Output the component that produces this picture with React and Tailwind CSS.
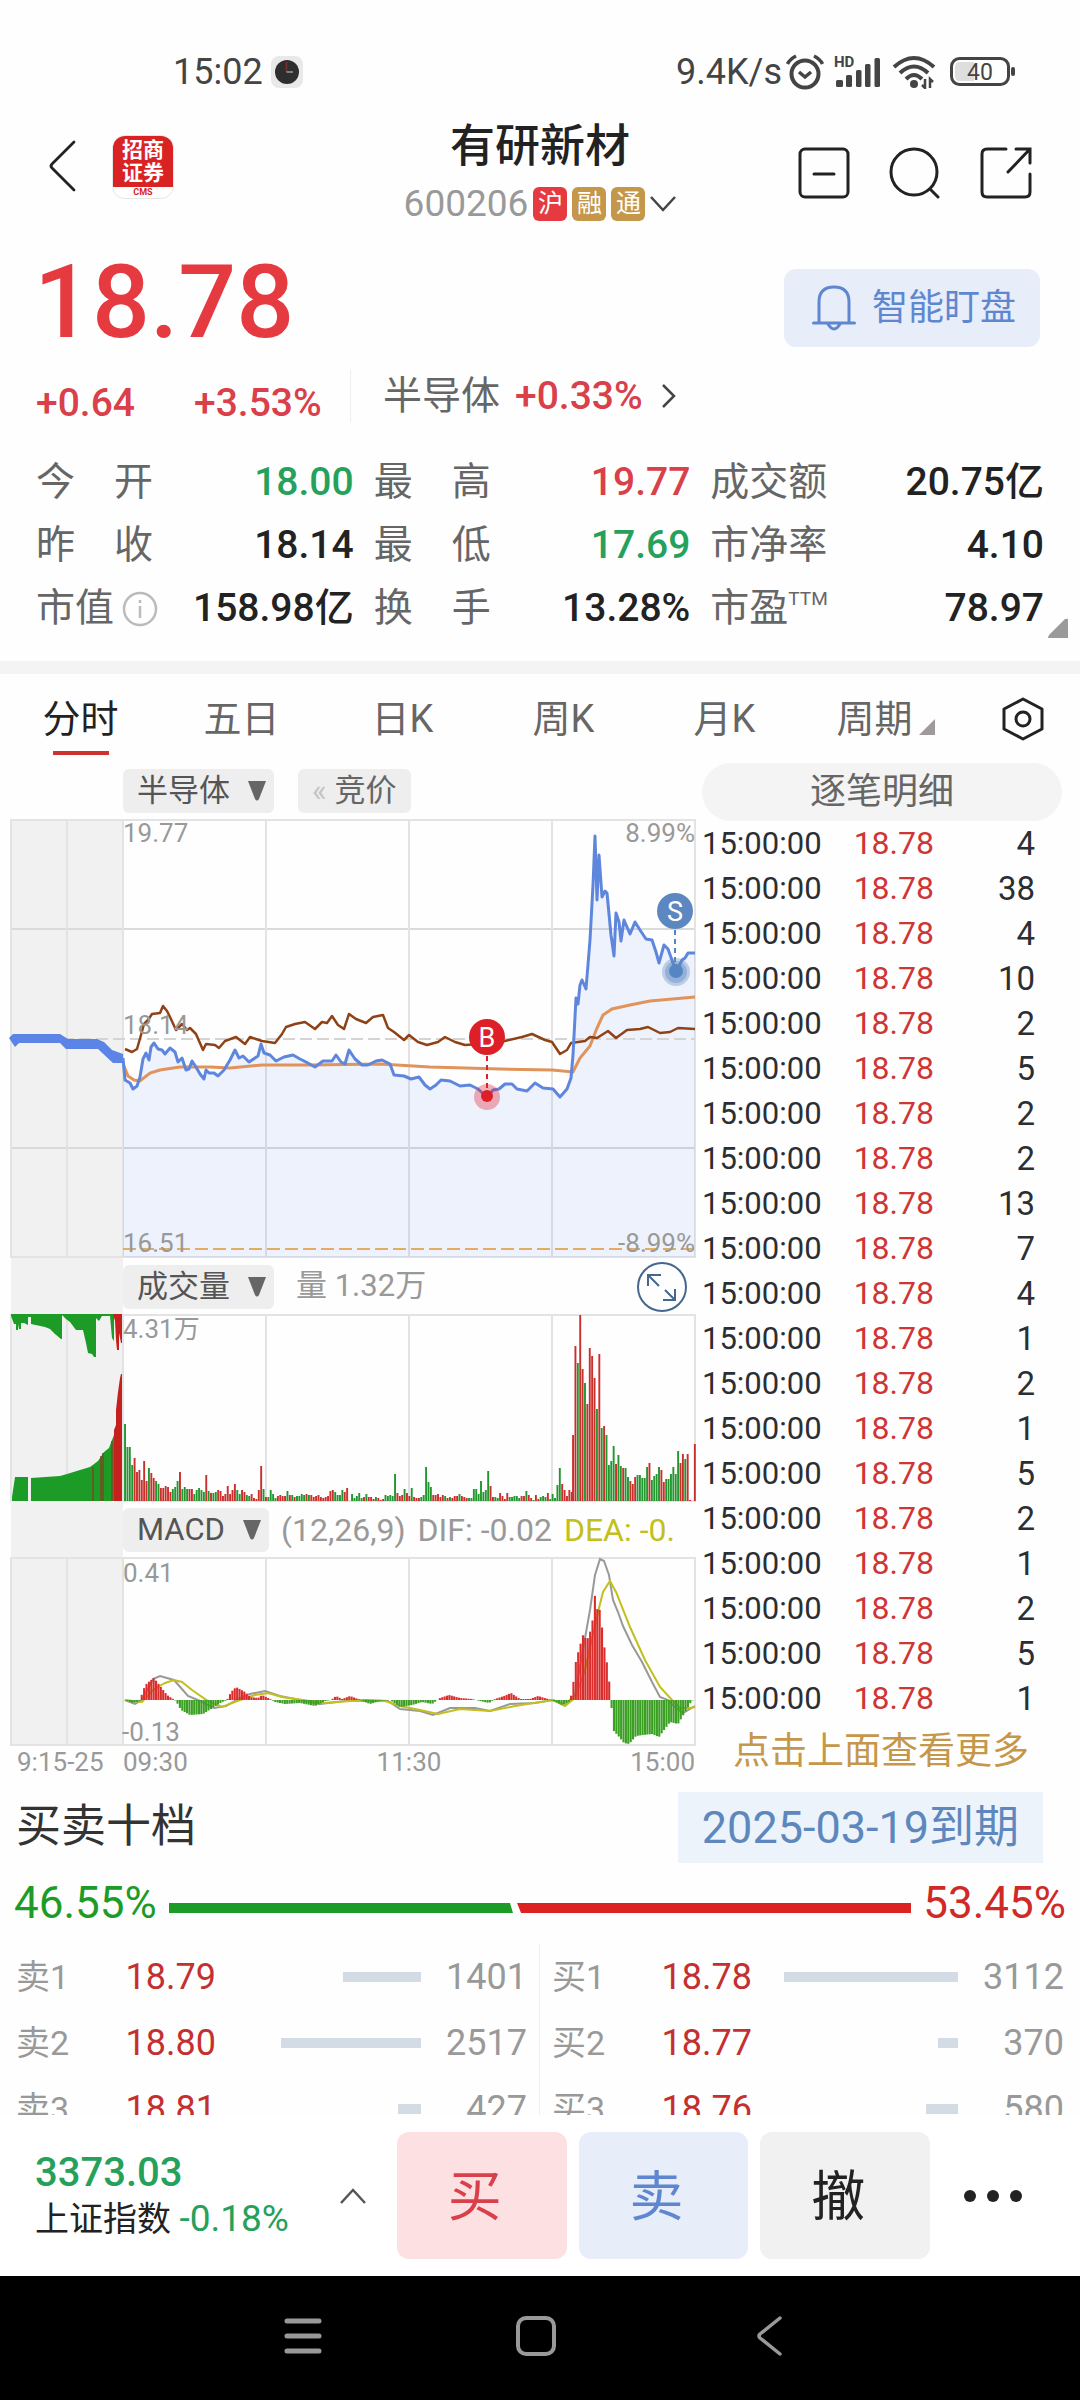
import React, { useState } from 'react';

const GREEN = '#1c9c26';

const indicadores = [
  { label: '今　开', value: '18.00', color: 'text-[#25a15c]' },
  { label: '最　高', value: '19.77', color: 'text-[#d9404a]' },
  { label: '成交额', value: '20.75亿', color: 'text-[#222222]' },
  { label: '昨　收', value: '18.14', color: 'text-[#222222]' },
  { label: '最　低', value: '17.69', color: 'text-[#25a15c]' },
  { label: '市净率', value: '4.10', color: 'text-[#222222]' },
  { label: '市值', value: '158.98亿', color: 'text-[#222222]', info: true },
  { label: '换　手', value: '13.28%', color: 'text-[#222222]' },
  { label: '市盈', value: '78.97', color: 'text-[#222222]', sup: 'TTM' },
];

const tabs = ['分时', '五日', '日K', '周K', '月K', '周期'];
const ticks = [4, 38, 4, 10, 2, 5, 2, 2, 13, 7, 4, 1, 2, 1, 5, 2, 1, 2, 5, 1];

const sells = [
  { name: '卖1', price: '18.79', bar: 78, qty: 1401 },
  { name: '卖2', price: '18.80', bar: 140, qty: 2517 },
  { name: '卖3', price: '18.81', bar: 23, qty: 427 },
];
const buys = [
  { name: '买1', price: '18.78', bar: 174, qty: 3112 },
  { name: '买2', price: '18.77', bar: 20, qty: 370 },
  { name: '买3', price: '18.76', bar: 32, qty: 580 },
];

// Chart series, in the shared chart coordinates
const price = '123,1058 125,1080 130,1083 133,1089 137,1086 140,1077 143,1059 146,1053 149,1060 151,1047 154,1043 158,1049 162,1050 165,1054 170,1048 175,1052 178,1062 182,1058 186,1070 189,1069 192,1061 196,1067 200,1074 204,1079 206,1070 209,1073 214,1073 218,1076 224,1070 230,1060 235,1050 239,1058 243,1056 249,1062 258,1056 261,1044 264,1053 270,1055 276,1061 284,1057 293,1055 300,1059 306,1062 315,1067 323,1061 332,1061 336,1055 341,1062 345,1064 349,1050 355,1059 362,1065 368,1065 376,1061 382,1060 390,1064 394,1075 404,1076 411,1079 419,1077 425,1085 430,1089 436,1085 441,1080 450,1081 460,1086 470,1085 478,1089 487,1097 493,1090 499,1089 505,1084 512,1084 517,1089 527,1091 535,1083 543,1088 553,1089 560,1097 567,1089 571,1078 573,1055 576,998 578,1004 580,985 582,980 586,989 590,940 593,885 595,836 597,900 599,855 602,897 605,891 607,893 611,935 614,956 616,913 619,922 621,941 624,920 630,934 635,922 640,930 646,939 652,940 656,952 659,963 664,945 668,949 673,963 677,970 682,960 685,958 688,953 695,953';
const average = '124,1066 128,1076 134,1080 140,1081 150,1073 160,1070 180,1067 210,1067 230,1068 262,1065 310,1065 380,1064 430,1067 500,1069 552,1070 573,1072 580,1058 590,1046 597,1028 603,1015 612,1009 630,1005 650,1001 695,997';
const sector = '125,1049 132,1052 137,1049 141,1035 144,1024 148,1020 152,1014 160,1013 163,1006 167,1011 170,1017 176,1030 182,1024 187,1030 190,1028 196,1034 203,1050 206,1044 215,1045 219,1048 225,1041 236,1037 245,1044 250,1037 262,1041 275,1043 282,1034 286,1027 295,1024 305,1022 315,1029 322,1022 327,1023 332,1016 338,1025 344,1029 349,1014 356,1019 366,1023 373,1017 383,1015 388,1028 394,1032 404,1040 409,1035 418,1042 427,1045 438,1042 445,1037 455,1042 465,1045 480,1044 505,1041 522,1037 532,1034 545,1040 552,1042 560,1054 567,1050 571,1043 585,1041 590,1037 597,1038 608,1031 616,1038 627,1030 640,1029 648,1027 660,1033 670,1032 678,1028 695,1029';
const dif = '125,1700 135,1704 142,1700 153,1679 160,1676 174,1680 188,1696 200,1701 214,1708 226,1706 240,1698 250,1694 265,1691 280,1696 300,1700 320,1704 345,1701 365,1700 388,1701 400,1709 420,1711 433,1715 450,1708 475,1708 490,1711 510,1704 535,1703 553,1700 565,1705 575,1695 585,1638 590,1610 595,1575 600,1559 604,1561 609,1575 613,1600 618,1612 623,1626 632,1645 642,1662 652,1682 660,1697 668,1700 675,1707 683,1713 695,1706';
const dea = '125,1700 142,1702 153,1690 165,1683 174,1680 182,1682 192,1690 208,1701 222,1707 240,1700 255,1695 268,1693 282,1697 310,1701 325,1703 350,1701 385,1701 400,1706 420,1710 438,1714 460,1709 490,1711 515,1706 553,1700 565,1706 575,1698 585,1670 598,1612 603,1592 610,1581 616,1592 630,1627 645,1660 660,1687 672,1700 680,1708 690,1708 695,1707';
const macd = [[124, 0], [133, -3], [140, -1], [143, 10], [147, 17], [154, 22], [160, 14], [167, 5], [173, 1], [176, -1], [181, -10], [190, -15], [203, -14], [214, -7], [222, -2], [227, 0], [231, 8], [236, 13], [245, 8], [250, 3], [258, 2], [262, 5], [270, 1], [275, -2], [285, -4], [300, -3], [315, -6], [325, -1], [331, 0], [336, 4], [342, 1], [350, 4], [358, 1], [362, -1], [370, -4], [380, -1], [390, 0], [400, -7], [412, -5], [422, -2], [432, -4], [440, 2], [449, 5], [460, 2], [472, 1], [480, -1], [489, -3], [495, 1], [504, 4], [511, 7], [520, 1], [530, 1], [538, 4], [548, 1], [556, -2], [562, -5], [570, -1], [573, 15], [576, 40], [581, 58], [583, 65], [587, 60], [590, 68], [593, 82], [595, 106], [597, 91], [600, 90], [604, 55], [608, 30], [611, 0], [613, -30], [620, -38], [624, -43], [629, -44], [636, -36], [643, -35], [652, -34], [659, -37], [664, -30], [670, -22], [678, -24], [685, -12], [691, -2], [695, 2]];

// r = up minute, g = down minute, number = bar height
const volume = [
  { start: 125, bars: 'g77 g54 g54 g36 r43 r29 r31 r21 r40 r20 g33 r28 r23 g20 g17 r13 r13 r15 r14 r9 g12 g14 g20 r29 g12 g14 g12 r12 r12 g7 g11 g13 g11 g9 r26 g10 r8 g8 g9 r11 r10 r5 r7 r15 r7 r11 r17 g11 g7 r11 r9 g6 g5 r7 r3 r2 r11 r35 g12 r4 g4 g11 g7 g3 r5 r6 r5 r5 g10 r6 g6 r4 g5 g5 g7 g6 r7 g6 r6 r4 r5 r6 r4 r3 r4 r5 r10 r11 g9 g6 g6 g11 r9 r13' },
  { start: 352, bars: 'g7 g3 g5 g8 g3 r4 g7 r4 r4 r2 g4 r3 r1 r2 g6 g5 g6 g5 g27 r8 r5 r6 g12 r8 r5 g13 r4 r3 r3 g4 g6 g34 g19 g14 r6 r6 r7 r4 r6 g5 r3 g4 r3 r5 r5 g7 r5 r4 r3 g3 g3 g12 g12 g7 g20 g9 g11 g30 r15 r4 g4 g3 r8 r5 r2 r8 g4 g4 g5 g5 g3 r5 r5 g10 r6 r3 g1 r6 r2 g4 g5 g4 r8 g2 g7 g3 g16 g33 r17 r11 r5 r11 r9' },
  { start: 573, bars: 'r66 r155 g138 r186 r132 g118 r97 r153 r145 r123 g92 r147 g73 r75 g66 g36 g40 g55 r37 g46 g35 r33 g33 g24 r20 r17 r24 g26 g26 g23 g23 g34 r38 g21 g25 g27 g34 r31 r19 g22 g22 g27 g34 g27 g50 r38 r47 g42 r47 r1 r0 r57' },
];

const valueAt = (x) => {
  const i = Math.max(1, macd.findIndex((p) => p[0] >= x));
  const [x0, y0] = macd[i - 1];
  const [x1, y1] = macd[i];
  return y0 + ((y1 - y0) * (x - x0)) / (x1 - x0);
};

function Grid({ top, bottom, rows = [] }) {
  return (
    <g stroke="#e3e3e3" strokeWidth="2" fill="none">
      <rect x="11" y={top} width="112" height={bottom - top} fill="#f1f1f1" />
      {rows.map((y) => <path key={y} d={`M11 ${y}H695`} stroke="#dadada" />)}
      {[67, 123, 266, 409, 552].map((x) => <path key={x} d={`M${x} ${top}V${bottom}`} />)}
      <rect x="11" y={top} width="684" height={bottom - top} />
    </g>
  );
}

function PriceChart() {
  return (
    <svg viewBox="11 820 684 438" className="block w-full overflow-visible" fontSize="26" fill="#999999">
      <Grid top={820} bottom={1257} rows={[929, 1148]} />
      <polygon points={`${price} 695,1257 123,1257`} fill="#4a78e8" fillOpacity="0.09" />
      <path d="M11 1039H695" stroke="#d4d4d4" strokeWidth="2" strokeDasharray="12 5" />
      <path d="M123 1249H695" stroke="#e3ac62" strokeWidth="2" strokeDasharray="13 5" />
      <polyline points={average} fill="none" stroke="#e0935a" strokeWidth="3" />
      <polyline points={sector} fill="none" stroke="#8f4216" strokeWidth="2.5" strokeLinejoin="round" />
      <polyline points={price} fill="none" stroke="#5f86dd" strokeWidth="3" strokeLinejoin="round" />
      <path d="M9 1038L13 1034H60L68 1039H97L104 1042L112 1050L123 1054V1063H113L98 1049H66L60 1043H19L15 1047Z" fill="#5b84e6" />
      <text x="123" y="842">19.77</text>
      <text x="123" y="1034">18.14</text>
      <text x="123" y="1252">16.51</text>
      <text x="695" y="842" textAnchor="end">8.99%</text>
      <text x="695" y="1252" textAnchor="end">-8.99%</text>
      <circle cx="487" cy="1097" r="13" fill="#e0202a" fillOpacity="0.35" />
      <circle cx="487" cy="1096" r="6" fill="#dd2027" />
      <path d="M487 1056V1090" stroke="#dd2027" strokeWidth="2" strokeDasharray="5 4" />
      <circle cx="487" cy="1037" r="18" fill="#dd2027" />
      <text x="487" y="1047" textAnchor="middle" fill="#fff" fontSize="27">B</text>
      <circle cx="676" cy="972" r="14" fill="#5d87c0" fillOpacity="0.35" />
      <circle cx="676" cy="972" r="11" fill="#5d87c0" fillOpacity="0.4" />
      <circle cx="676" cy="971" r="7" fill="#5585c2" />
      <path d="M675 930V962" stroke="#5585c2" strokeWidth="2" strokeDasharray="5 4" />
      <circle cx="675" cy="911" r="18" fill="#5d87c0" />
      <text x="675" y="921" textAnchor="middle" fill="#fff" fontSize="27">S</text>
    </svg>
  );
}

function VolumeChart() {
  return (
    <svg viewBox="11 1315 684 186" className="block w-full overflow-visible" fontSize="26" fill="#999999">
      <Grid top={1315} bottom={1501} />
      <path fill={GREEN} d="M11 1314V1316L14 1324H16V1330H18V1324L19 1329H21V1323H24L28 1325V1317H31V1324L45 1327L50 1329L55 1334L61 1339H62V1315L66 1319L70 1322L76 1330H83L86 1343L88 1353L92 1354L94 1357H96V1318L99 1321L102 1316H110L112 1338L114 1341V1314Z" />
      <path fill="#c5201e" d="M113 1314L115 1321L116 1340L117 1350H119V1333L121 1343H122V1314Z" />
      <path fill={GREEN} d="M12 1501V1497L15 1477H28V1501ZM31 1501V1478L60 1476L67 1474L80 1470L90 1467L98 1461L104 1452L109 1448L112 1440L114 1435V1501Z" />
      <path fill="#c5201e" d="M114 1501V1430L116 1425V1410L118 1392L120 1378L121 1374H122V1501Z" />
      <path stroke="#7a4a20" strokeWidth="1.5" d="M93 1501V1467M101 1501V1456M103 1501V1453M112 1501V1441" />
      {volume.map((part) => part.bars.split(' ').map((bar, i) => {
        const height = Number(bar.slice(1));
        return (
          <rect key={part.start + i} x={part.start + i * 2.388 - 0.9} y={1501 - height} width="1.9" height={height} fill={bar[0] === 'r' ? '#c9302c' : '#23962f'} />
        );
      }))}
      <text x="123" y="1338">4.31万</text>
    </svg>
  );
}

function MacdChart() {
  const bars = [];
  for (let x = 125; x < 695; x += 2.385) bars.push({ x, v: valueAt(x) });
  return (
    <svg viewBox="11 1558 684 187" className="block w-full overflow-visible" fontSize="26" fill="#999999">
      <Grid top={1558} bottom={1745} />
      <polyline points={dif} fill="none" stroke="#999" strokeWidth="2" />
      <polyline points={dea} fill="none" stroke="#c3bf1c" strokeWidth="2" />
      {bars.map(({ x, v }) => (
        <rect key={x} x={x - 1} y={v > 0 ? 1700 - v : 1700} width="2.1" height={Math.abs(v)} fill={v > 0 ? '#db2e2c' : '#3a9f22'} />
      ))}
      <text x="123" y="1582">0.41</text>
      <text x="122" y="1741">-0.13</text>
    </svg>
  );
}

function Dropdown({ label, options }) {
  return (
    <span className="relative inline-flex h-11 rounded-md bg-[#eeeeee]">
      <select aria-label={label} className="appearance-none bg-transparent pl-3.5 pr-11 text-[31px] leading-[44px] text-[#555555]">
        {options.map((o) => <option key={o}>{o}</option>)}
      </select>
      <svg viewBox="0 0 18 20" className="pointer-events-none absolute right-2 top-3 h-5 w-[18px]" fill="#666666">
        <path d="M0 0H18L11 18Q9 21 7 18Z" />
      </svg>
    </span>
  );
}

function OrderTable({ rows, label }) {
  return (
    <table className="w-full table-fixed" aria-label={label}>
      <colgroup>
        <col className="w-[78px]" />
        <col className="w-[122px]" />
        <col />
        <col className="w-[106px]" />
      </colgroup>
      <tbody>
        {rows.map((r) => (
          <tr key={r.name} className="h-[66px] text-[36px] text-[#999999]">
            <td className="p-0 text-[34px]">{r.name}</td>
            <td className="p-0 text-right text-[#c4302f]">{r.price}</td>
            <td className="p-0"><div className="ml-auto h-2.5 bg-[#d3dbe4]" style={{ width: r.bar }}></div></td>
            <td className="p-0 text-right">{r.qty}</td>
          </tr>
        ))}
      </tbody>
    </table>
  );
}

function StatusBar() {
  return (
    <div className="flex h-28 items-center justify-between pl-[173px] pr-16 pt-8 text-[#444444]">
      <div className="flex items-center gap-2">
        <span className="text-[36px]">15:02</span>
        <svg viewBox="0 0 32 32" className="size-8">
          <rect width="32" height="32" rx="8" fill="#e9e9e9" />
          <circle cx="16" cy="16" r="12" fill="#2e2e2e" />
          <path d="M15.5 6V16" stroke="#7e3030" strokeWidth="1.5" />
          <path d="M15.5 16H22" stroke="#8a8a8a" strokeWidth="1.8" />
        </svg>
      </div>
      <div className="flex items-center">
        <span className="mr-1 text-[36px]">9.4K/s</span>
        <svg viewBox="0 0 38 38" className="mr-2.5 size-[38px]" fill="none" stroke="#444" strokeWidth="4">
          <circle cx="19" cy="21" r="13.5" />
          <path d="M13 19L19 24L25 19" strokeWidth="3.5" />
          <path d="M1.5 11Q4 6 10 3M36.5 11Q34 6 28 3" strokeWidth="3.5" />
        </svg>
        <svg viewBox="0 0 46 34" className="mr-3 h-[34px] w-[46px] overflow-visible" fill="#444">
          <text x="0" y="12" fontSize="15" fontWeight="700">HD</text>
          <rect x="2" y="25" width="7" height="7" rx="1.5" />
          <rect x="12" y="20" width="6" height="12" rx="1.5" />
          <rect x="22" y="15" width="5.5" height="17" rx="1.5" />
          <rect x="31" y="9" width="5.5" height="23" rx="1.5" />
          <rect x="40.5" y="3" width="5.5" height="29" rx="1.5" />
        </svg>
        <svg viewBox="0 0 44 34" className="mr-3.5 h-[34px] w-11" fill="none" stroke="#444" strokeWidth="4">
          <path d="M2 12Q22 -6 42 12M8 18Q22 5 36 18M14 24Q22 16 30 24" />
          <circle cx="22" cy="29" r="4" fill="#444" stroke="none" />
          <path d="M33 24V33L30 30M38 33V24L41 27" strokeWidth="2.5" />
        </svg>
        <svg viewBox="0 0 66 30" className="h-[30px] w-[66px]" fill="none">
          <rect x="1.5" y="1.5" width="57" height="26" rx="8" stroke="#444" strokeWidth="3" />
          <path d="M10 5H24V24H10Q5 24 5 19V10Q5 5 10 5Z" fill="#dedede" />
          <rect x="61" y="10" width="4" height="9" rx="2" fill="#444" />
          <text x="30" y="23" fontSize="23" textAnchor="middle" fill="#444">40</text>
        </svg>
      </div>
    </div>
  );
}

function Header() {
  return (
    <header className="flex h-[122px] items-center justify-between px-12">
      <div className="flex flex-1 items-center gap-9 pb-3">
        <button aria-label="返回">
          <svg viewBox="0 0 28 54" className="h-[54px] w-7" fill="none" stroke="#222" strokeWidth="2.8" strokeLinecap="round" strokeLinejoin="round">
            <path d="M26 2L4 24Q2 26 4 28L26 50" />
          </svg>
        </button>
        <div className="flex h-16 w-[62px] flex-col overflow-hidden rounded-[13px] border border-[#e6e6e6] bg-white text-center">
          <div className="flex-1 bg-[#d92323] pt-[3px] text-[21px] font-bold leading-[23px] text-white">招商<br />证券</div>
          <div className="text-[9px] font-bold leading-[11px] text-[#d92323]">CMS</div>
        </div>
      </div>
      <div className="flex flex-col items-center pt-0.5">
        <h1 className="text-[45px] font-medium leading-[60px] text-[#222222]">有研新材</h1>
        <button className="flex h-[54px] items-center gap-[5px] text-[37px] text-[#999999]">
          600206
          <span className="size-[34px] rounded-md bg-[#e63a41] text-center text-[25px] leading-[34px] text-white">沪</span>
          <span className="size-[34px] rounded-md bg-[#c4974a] text-center text-[25px] leading-[34px] text-white">融</span>
          <span className="size-[34px] rounded-md bg-[#c4974a] text-center text-[25px] leading-[34px] text-white">通</span>
          <svg viewBox="0 0 26 16" className="h-4 w-[26px]" fill="none" stroke="#444" strokeWidth="2.5"><path d="M1 1L13 14L25 1" /></svg>
        </button>
      </div>
      <div className="flex flex-1 items-center justify-end gap-[39px] text-[#222222]">
        <button aria-label="删除自选">
          <svg viewBox="0 0 52 52" className="size-[52px]" fill="none" stroke="currentColor" strokeWidth="3" strokeLinecap="round">
            <rect x="2" y="2" width="48" height="48" rx="5" /><path d="M16 27H36" />
          </svg>
        </button>
        <button aria-label="搜索">
          <svg viewBox="0 0 52 52" className="size-[52px]" fill="none" stroke="currentColor" strokeWidth="3" strokeLinecap="round">
            <circle cx="25" cy="25" r="23" /><path d="M41 42L49 50" />
          </svg>
        </button>
        <button aria-label="分享">
          <svg viewBox="0 0 52 52" className="size-[52px]" fill="none" stroke="currentColor" strokeWidth="3" strokeLinecap="round">
            <path d="M26 2H7Q2 2 2 7V45Q2 50 7 50H45Q50 50 50 45V27M36 2H50V16M50 2L28 25" />
          </svg>
        </button>
      </div>
    </header>
  );
}

export default function App() {
  const [tab, setTab] = useState('分时');

  return (
    <div className="w-full bg-[#fefefe] font-['Roboto','Noto_Sans_CJK_SC',sans-serif]">
      <StatusBar />
      <Header />

      <section>
        <div className="flex h-[136px] items-center justify-between pl-[34px] pr-10">
          <div className="text-[102px] font-medium leading-none text-[#e63a41]">18.78</div>
          <button className="mt-3 flex h-[78px] items-center gap-4 rounded-xl bg-[#e7edf9] pl-7 pr-6 text-[36px] text-[#5f87d0]">
            <svg viewBox="0 0 44 46" className="h-[46px] w-11" fill="none" stroke="currentColor" strokeWidth="3" strokeLinecap="round">
              <path d="M1.5 38H42.5M7 38V17Q7 2 22 2T37 17V38M16 39Q22 49 28 39" />
            </svg>
            智能盯盘
          </button>
        </div>
        <div className="flex h-[52px] pl-9">
          <div className="flex w-[315px] items-end border-r border-[#eeeeee] text-[39px] font-medium leading-[38px] text-[#d9404a]">
            <span className="w-[158px]">+0.64</span>
            <span>+3.53%</span>
          </div>
          <button className="flex items-center gap-[15px] pl-8 text-[39px] leading-none text-[#666666]">
            半导体
            <span className="font-medium text-[#d9404a]">+0.33%</span>
            <svg viewBox="0 0 14 24" className="ml-1 h-6 w-3.5" fill="none" stroke="#444" strokeWidth="2.5"><path d="M1 1L12 12L1 23" /></svg>
          </button>
        </div>
        <dl className="relative mt-[29px] grid grid-cols-[317fr_316fr_333fr] gap-x-5 pb-[21px] pl-9 pr-9">
          {indicadores.map((item) => (
            <div key={item.label} className="flex h-[63px] items-center justify-between whitespace-nowrap text-[39px] leading-none">
              <dt className="flex items-center text-[#666666]">
                {item.label}
                {item.info && (
                  <svg viewBox="0 0 36 36" className="ml-2 size-9" fill="none" stroke="#bbbbbb" strokeWidth="2.5">
                    <circle cx="18" cy="18" r="16" /><path d="M18 15V27M18 9V12" />
                  </svg>
                )}
                {item.sup && <sup className="text-[19px]">{item.sup}</sup>}
              </dt>
              <dd className={`font-medium ${item.color}`}>{item.value}</dd>
            </div>
          ))}
          <svg viewBox="0 0 20 20" className="absolute bottom-[23px] right-3 size-5" fill="#9a9a9a"><path d="M0 20Q0 18 2 16L17 1Q20 0 20 2V20Z" /></svg>
        </dl>
      </section>

      <div className="h-[13px] bg-[#f4f4f4]"></div>

      <nav className="grid grid-cols-[repeat(6,161fr)_114fr]">
        {tabs.map((t) => (
          <button key={t} onClick={() => setTab(t)} className={`flex h-[81px] flex-col items-center justify-between pt-3.5 text-[38px] ${tab === t ? 'text-[#222222]' : 'text-[#666666]'}`}>
            <span className="flex h-[62px] items-center gap-1.5">
              {t}
              {t === '周期' && <svg viewBox="0 0 16 16" className="mt-4 size-4" fill="#a09a9a"><path d="M0 16L16 0V16Z" /></svg>}
            </span>
            {tab === t && <span className="h-1 w-14 bg-[#cf3030]"></span>}
          </button>
        ))}
        <button aria-label="设置" className="flex items-center justify-center pt-2">
          <svg viewBox="0 0 42 44" className="h-11 w-[42px]" fill="none" stroke="#222" strokeWidth="3" strokeLinejoin="round">
            <path d="M21 2L40 12V32L21 42L2 32V12Z" /><circle cx="21" cy="22" r="7" />
          </svg>
        </button>
      </nav>

      <main className="grid grid-cols-[695fr_385fr]">
        <div className="pl-[11px]">
          <div className="grid h-[65px] grid-cols-[112fr_572fr]">
            <div></div>
            <div className="flex items-start gap-6 pt-3.5">
              <Dropdown label="叠加板块" options={['半导体']} />
              <button className="flex h-11 items-center gap-2 rounded-md bg-[#eeeeee] px-3.5 text-[31px] text-[#666666]">
                <span className="text-[#c4c4c4]">«</span>竞价
              </button>
            </div>
          </div>
          <PriceChart />
          <div className="grid h-[57px] grid-cols-[112fr_572fr]">
            <div className="bg-[#f1f1f1]"></div>
            <div className="flex items-center pr-2 text-[31px] text-[#999999]">
              <Dropdown label="副图一" options={['成交量']} />
              <span className="ml-[22px] flex-1">量 1.32万</span>
              <button aria-label="全屏">
                <svg viewBox="0 0 50 50" className="size-[50px]" fill="none" stroke="#44668f" strokeWidth="2">
                  <circle cx="25" cy="25" r="24" />
                  <path d="M11 24V13H24M11 13L22 24M38 27V38H26M38 38L28 28" />
                </svg>
              </button>
            </div>
          </div>
          <VolumeChart />
          <div className="grid h-[57px] grid-cols-[112fr_572fr]">
            <div className="bg-[#f1f1f1]"></div>
            <div className="flex items-center gap-3 whitespace-nowrap text-[32px] text-[#999999]">
              <Dropdown label="副图二" options={['MACD']} />
              <span>(12,26,9)</span>
              <span>DIF: -0.02</span>
              <span className="text-[#c3bf1c]">DEA: -0.</span>
            </div>
          </div>
          <MacdChart />
          <div className="grid h-[34px] grid-cols-[112fr_572fr] items-center text-[26px] leading-none text-[#999999]">
            <span className="pl-1.5">9:15-25</span>
            <div className="grid grid-cols-3">
              <span>09:30</span>
              <span className="text-center">11:30</span>
              <span className="text-right">15:00</span>
            </div>
          </div>
        </div>

        <div className="pl-[7px]">
          <button className="mt-2 flex h-[58px] w-[calc(100%-18px)] items-center justify-center rounded-full bg-[#f4f4f4] text-[36px] text-[#666666]">逐笔明细</button>
          <table className="w-full table-fixed text-[#2b2f33]" aria-label="逐笔成交">
            <colgroup>
              <col className="w-[132px]" />
              <col className="w-[100px]" />
              <col />
            </colgroup>
            <tbody>
              {ticks.map((qty, i) => (
                <tr key={i} className="h-[45px] leading-[45px]">
                  <td className="p-0 text-[31px]">15:00:00</td>
                  <td className="p-0 text-right text-[32px] text-[#cf3535]">18.78</td>
                  <td className="p-0 pr-[45px] text-right text-[33px]">{qty}</td>
                </tr>
              ))}
            </tbody>
          </table>
          <a href="#ticks" className="flex h-[61px] items-center justify-center pr-5 text-[37px] text-[#c4974a]">点击上面查看更多</a>
        </div>
      </main>

      <section>
        <div className="flex h-[90px] items-center justify-between pl-4 pr-[37px]">
          <h2 className="text-[45px] text-[#333333]">买卖十档</h2>
          <button className="h-[71px] bg-[#ecf3fa] px-6 text-[45px] leading-[71px] text-[#5d87bd]">2025-03-19到期</button>
        </div>
        <div className="flex h-[62px] items-center gap-3 px-3.5 text-[44px]">
          <span className="text-[#1c9c26]">46.55%</span>
          <svg viewBox="0 0 736 10" preserveAspectRatio="none" className="mt-2.5 h-2.5 min-w-0 flex-1">
            <path d="M0 0H338L341 10H0Z" fill={GREEN} />
            <path d="M345 0H736V10H349Z" fill="#dd2222" />
          </svg>
          <span className="text-[#cf2a27]">53.45%</span>
        </div>
        <div className="mt-2 grid h-[173px] grid-cols-2 overflow-hidden pt-0.5">
          <div className="border-r border-[#eeeeee] pl-4 pr-3"><OrderTable rows={sells} label="卖盘" /></div>
          <div className="pl-3 pr-4"><OrderTable rows={buys} label="买盘" /></div>
        </div>
      </section>

      <footer>
        <div className="grid h-[161px] grid-cols-[397fr_533fr_150fr] items-center bg-white">
          <button className="flex items-center justify-between pl-[35px] pr-[31px] text-left">
            <span className="whitespace-nowrap">
              <span className="block text-[40px] font-medium leading-[46px] text-[#25a15c]">3373.03</span>
              <span className="block text-[34px] leading-[46px] text-[#222222]">上证指数 <span className="text-[37px] text-[#25a15c]">-0.18%</span></span>
            </span>
            <svg viewBox="0 0 26 16" className="h-4 w-[26px]" fill="none" stroke="#555" strokeWidth="2.5"><path d="M1 15L13 2L25 15" /></svg>
          </button>
          <div className="grid grid-cols-3 gap-3 text-[54px] leading-none">
            <button className="h-[127px] rounded-xl bg-[#fce0e2] pr-3.5 pt-1 text-[#d9404a]">买</button>
            <button className="h-[127px] rounded-xl bg-[#e7edf9] pr-3.5 pt-1 text-[#5f87d0]">卖</button>
            <button className="h-[127px] rounded-xl bg-[#f1f1f1] pr-3.5 pt-1 text-[#222222]">撤</button>
          </div>
          <button aria-label="更多" className="flex justify-center pr-6">
            <svg viewBox="0 0 58 12" className="h-3 w-[58px]" fill="#222"><circle cx="6" cy="6" r="6" /><circle cx="29" cy="6" r="6" /><circle cx="52" cy="6" r="6" /></svg>
          </button>
        </div>
        <div className="flex h-[124px] items-center justify-center gap-[194px] bg-black pb-1 pr-2 text-[#999999]">
          <button aria-label="最近任务">
            <svg viewBox="0 0 38 38" className="size-[38px]" stroke="currentColor" strokeWidth="5" strokeLinecap="round"><path d="M3 4H35M3 19H35M3 34H35" /></svg>
          </button>
          <button aria-label="主页">
            <svg viewBox="0 0 40 40" className="size-10" fill="none" stroke="currentColor" strokeWidth="4"><rect x="2" y="2" width="36" height="36" rx="8" /></svg>
          </button>
          <button aria-label="返回上一页">
            <svg viewBox="0 0 38 40" className="h-10 w-[38px]" fill="none" stroke="currentColor" strokeWidth="3.5" strokeLinecap="round" strokeLinejoin="round"><path d="M30 2L10 18Q8 20 10 22L30 38" /></svg>
          </button>
        </div>
      </footer>
    </div>
  );
}
